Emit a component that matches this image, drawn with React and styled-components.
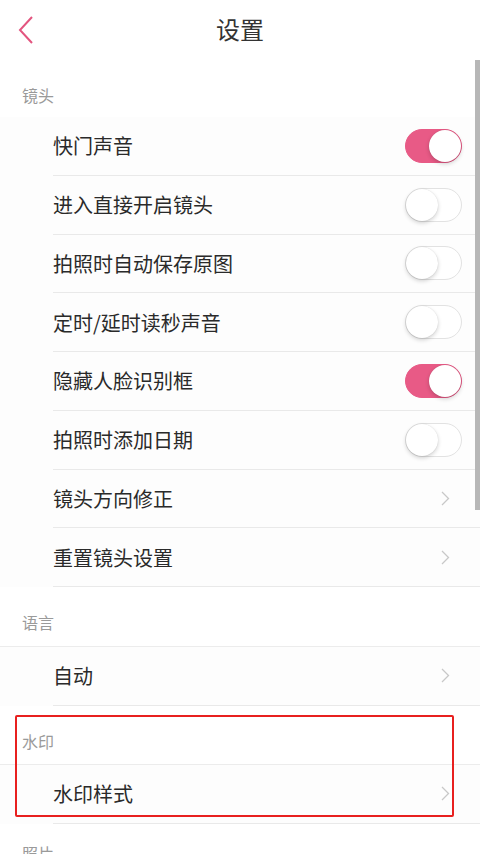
import React from "react";
import styled, { createGlobalStyle } from "styled-components";

const GlobalStyle = createGlobalStyle`
  html, body {
    margin: 0;
    padding: 0;
    background: #ffffff;
    font-family: "Noto Sans CJK SC", "Noto Sans", sans-serif;
  }
`;

const Page = styled.div`
  position: relative;
  width: 480px;
  height: 854px;
  overflow: hidden;
  background: #ffffff;
`;

const Header = styled.div`
  position: relative;
  height: 60px;
  display: flex;
  align-items: center;
  justify-content: center;
`;

const BackButton = styled.div`
  position: absolute;
  left: 17px;
  top: 15px;
  width: 20px;
  height: 30px;
  display: flex;
  align-items: center;
`;

const Title = styled.h1`
  margin: 0;
  font-size: 24px;
  font-weight: 400;
  color: #333;
  line-height: 1;
  padding-bottom: 2px;
`;

const SectionTitle = styled.div`
  height: ${(p) => p.height}px;
  box-sizing: border-box;
  padding: ${(p) => p.top}px 0 0 22px;
  font-size: 16px;
  line-height: 18px;
  color: #9a9a9a;
`;

const Group = styled.div`
  background: #fdfdfd;
  border-top: ${(p) => (p.bordered ? "1px solid #ececec" : "none")};
`;

const Row = styled.div`
  height: 58.75px;
  box-sizing: border-box;
  margin-left: 53px;
  padding-right: ${(p) => (p.arrow ? 30 : 18)}px;
  border-bottom: 1px solid #e9e9e9;
  display: flex;
  align-items: center;
  justify-content: space-between;
`;

const Label = styled.span`
  font-size: 20px;
  color: #2a2a2a;
`;

const Track = styled.div`
  position: relative;
  width: 57px;
  height: 34px;
  box-sizing: border-box;
  border-radius: 17px;
  background: ${(p) => (p.on ? "#e85a86" : "#ffffff")};
  border: 1px solid ${(p) => (p.on ? "#e85a86" : "#e2e2e2")};
`;

const Knob = styled.div`
  position: absolute;
  top: 0;
  left: ${(p) => (p.on ? 23 : 0)}px;
  width: 32px;
  height: 32px;
  border-radius: 50%;
  background: #ffffff;
  box-shadow: 0 2px 4px rgba(0, 0, 0, 0.18), 0 0 1px rgba(0, 0, 0, 0.15);
`;

const Scrollbar = styled.div`
  position: absolute;
  right: 0;
  top: 60px;
  width: 5px;
  height: 450px;
  background: #b7b7b7;
`;

const Highlight = styled.div`
  position: absolute;
  left: 15px;
  top: 9px;
  width: 439px;
  height: 102px;
  box-sizing: border-box;
  border: 2px solid #e8201f;
  border-radius: 2px;
  pointer-events: none;
`;

const Marked = styled.div`
  position: relative;
`;

function Toggle({ on }) {
  return (
    <Track on={on}>
      <Knob on={on} />
    </Track>
  );
}

function Chevron() {
  return (
    <svg width="9" height="15" viewBox="0 0 9 15">
      <polyline points="1,1 7.5,7.5 1,14" fill="none" stroke="#c8c8c8" strokeWidth="1.3" />
    </svg>
  );
}

function Item({ label, toggle, on }) {
  return (
    <Row arrow={!toggle}>
      <Label>{label}</Label>
      {toggle ? <Toggle on={on} /> : <Chevron />}
    </Row>
  );
}

const cameraItems = [
  { label: "快门声音", toggle: true, on: true },
  { label: "进入直接开启镜头", toggle: true },
  { label: "拍照时自动保存原图", toggle: true },
  { label: "定时/延时读秒声音", toggle: true },
  { label: "隐藏人脸识别框", toggle: true, on: true },
  { label: "拍照时添加日期", toggle: true },
  { label: "镜头方向修正" },
  { label: "重置镜头设置" },
];

export default function App() {
  return (
    <Page>
      <GlobalStyle />
      <Header>
        <BackButton>
          <svg width="18" height="30" viewBox="0 0 18 30">
            <polyline points="15,2 3,15 15,28" fill="none" stroke="#e3557f" strokeWidth="2" />
          </svg>
        </BackButton>
        <Title>设置</Title>
      </Header>

      <SectionTitle height={57} top={26}>镜头</SectionTitle>
      <Group>
        {cameraItems.map((item) => (
          <Item key={item.label} {...item} />
        ))}
      </Group>

      <SectionTitle height={59} top={26}>语言</SectionTitle>
      <Group bordered>
        <Item label="自动" />
      </Group>

      <Marked>
        <SectionTitle height={58} top={26}>水印</SectionTitle>
        <Group bordered>
          <Item label="水印样式" />
        </Group>
        <Highlight />
      </Marked>

      <SectionTitle height={58} top={20}>照片</SectionTitle>
      <Scrollbar />
    </Page>
  );
}
